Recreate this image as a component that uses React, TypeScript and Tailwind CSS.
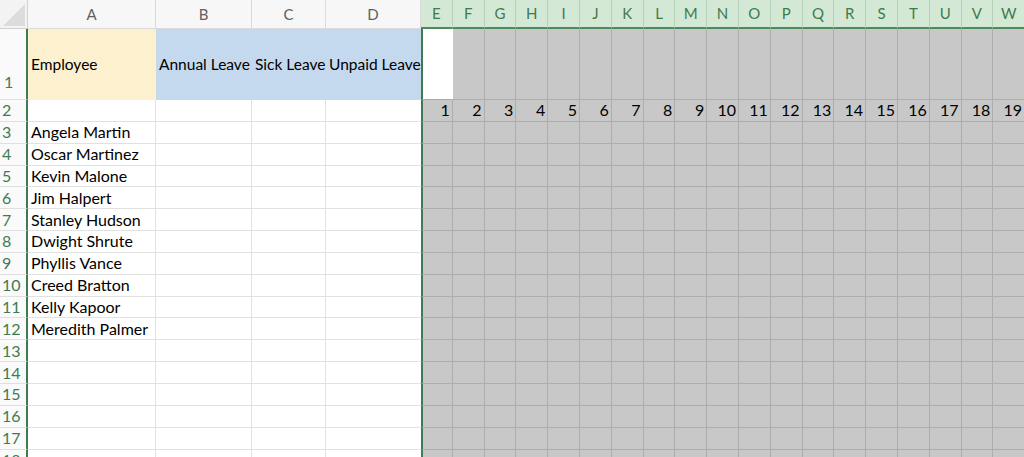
const leftCols = ["A", "B", "C", "D"];
const dayCols = ["E", "F", "G", "H", "I", "J", "K", "L", "M", "N", "O", "P", "Q", "R", "S", "T", "U", "V", "W"];

const employees = [
  "Angela Martin",
  "Oscar Martinez",
  "Kevin Malone",
  "Jim Halpert",
  "Stanley Hudson",
  "Dwight Shrute",
  "Phyllis Vance",
  "Creed Bratton",
  "Kelly Kapoor",
  "Meredith Palmer",
];

const rowNums = Array.from({ length: 17 }, (_, i) => i + 2);

const App = () => {
  return (
    <div
      className="w-[1024px] h-[457px] overflow-hidden bg-white text-[16px] text-black"
      style={{ fontFamily: "Lato, 'Open Sans', sans-serif" }}
    >
      <div className="grid grid-cols-[28px_128px_96px_74px_95px_repeat(19,31.8px)] grid-rows-[29px_71px_repeat(17,21.85px)]">
        {/* column header row */}
        <div className="relative bg-[#f3f3f3] border-r border-b border-[#d0d0d0]">
          <svg className="absolute right-[2px] bottom-[2px]" width="22" height="22" viewBox="0 0 22 22">
            <polygon points="22,0 22,22 0,22" fill="#dcdcdc" />
          </svg>
        </div>
        {leftCols.map((c) => (
          <div
            key={c}
            className="flex items-center justify-center bg-[#f7f7f7] border-r border-b border-[#dadada] text-[15px] text-[#5f5f5f]"
          >
            {c}
          </div>
        ))}
        {dayCols.map((c) => (
          <div
            key={c}
            className="flex items-center justify-center bg-[#d3e9d5] border-r border-[#b5d2b9] border-b-2 border-b-[#4f8a5e] text-[15px] text-[#3f7a50]"
          >
            {c}
          </div>
        ))}

        {/* row 1 */}
        <div className="flex items-end pl-[4px] pb-[5px] bg-[#fafafa] border-r-2 border-r-[#3f7a50] border-b border-b-[#e0e0e0] text-[#3f7a50]">
          1
        </div>
        <div className="flex items-center pl-[3px] bg-[#fdf0cf] text-[15.5px]">Employee</div>
        <div className="flex items-center pl-[3px] bg-[#c5d9ee] whitespace-nowrap text-[15.5px]">Annual Leave</div>
        <div className="flex items-center pl-[3px] bg-[#c5d9ee] whitespace-nowrap text-[15.5px]">Sick Leave</div>
        <div className="flex items-center pl-[3px] bg-[#c5d9ee] whitespace-nowrap text-[15.5px]">Unpaid Leave</div>
        {dayCols.map((c, i) => (
          <div
            key={c}
            className={
              i === 0
                ? "bg-white border-l-2 border-l-[#3f7a50] border-b border-b-[#a9a9a9]"
                : "bg-[#c8c8c8] border-r border-b border-[#adadad]"
            }
          />
        ))}

        {/* rows 2 - 18 */}
        {rowNums.map((r) => {
          const name = r >= 3 && r <= 12 ? employees[r - 3] : "";
          return [
            <div
              key={`h${r}`}
              className="flex items-center pl-[2px] bg-[#fafafa] border-r-2 border-r-[#3f7a50] border-b border-b-[#e0e0e0] text-[#3f7a50] leading-none"
            >
              {r}
            </div>,
            <div
              key={`a${r}`}
              className="flex items-center pl-[3px] border-r border-b border-[#e1e1e1] whitespace-nowrap leading-none"
            >
              {name}
            </div>,
            <div key={`b${r}`} className="border-r border-b border-[#e1e1e1]" />,
            <div key={`c${r}`} className="border-r border-b border-[#e1e1e1]" />,
            <div key={`d${r}`} className="border-b border-[#e1e1e1]" />,
            ...dayCols.map((c, i) => (
              <div
                key={`${c}${r}`}
                className={
                  "flex items-center justify-end pr-[2px] bg-[#c8c8c8] border-r border-b border-[#adadad] leading-none" +
                  (i === 0 ? " border-l-2 border-l-[#3f7a50]" : "")
                }
              >
                {r === 2 ? i + 1 : ""}
              </div>
            )),
          ];
        })}
      </div>
    </div>
  );
};

export default App;
